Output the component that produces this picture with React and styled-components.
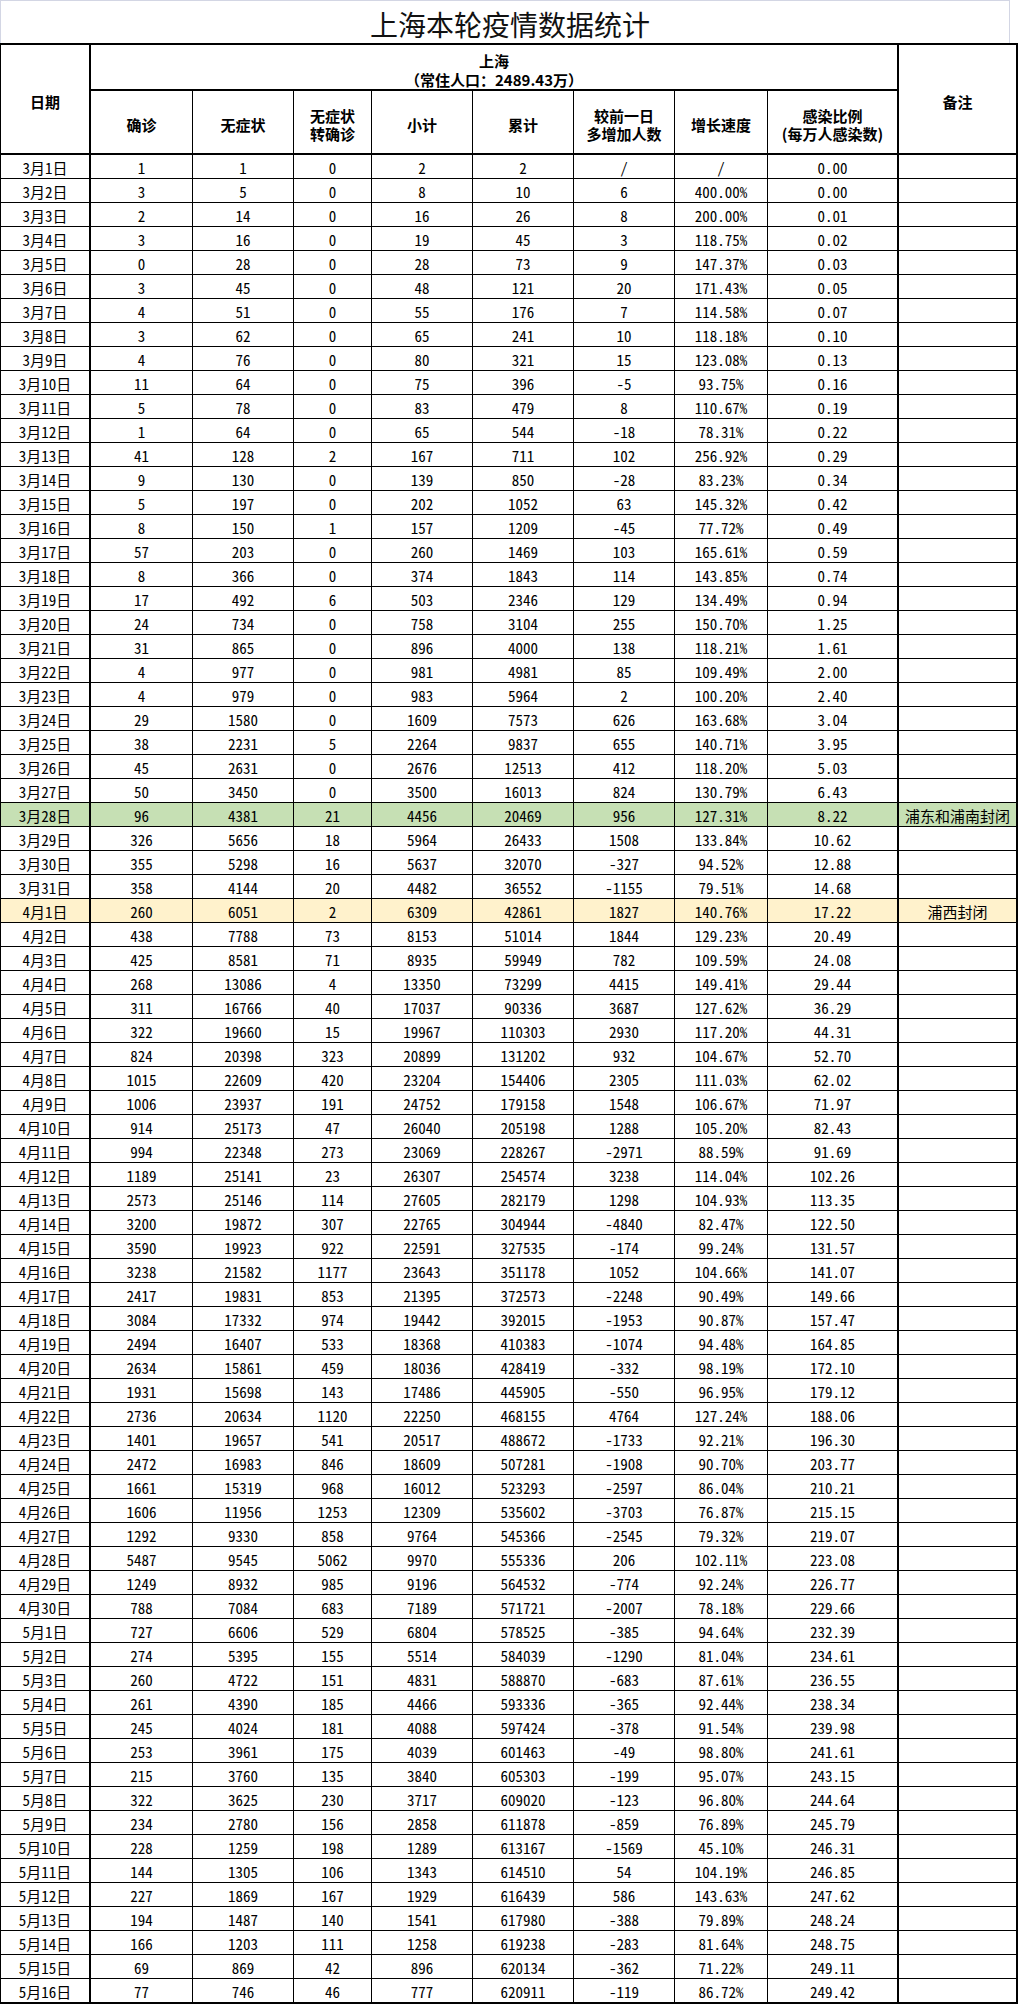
import React from 'react';
import styled, { createGlobalStyle } from 'styled-components';

const GlobalStyle = createGlobalStyle`
  html, body { margin: 0; padding: 0; background: #fff; }
  body { font-family: "Noto Sans CJK SC", "Noto Sans", sans-serif; color: #000; }
`;

const COLS = [90, 102, 101, 78, 101, 101, 101, 93, 131, 119];

const DATA = `3月1日 1 1 0 2 2 / / 0.00
3月2日 3 5 0 8 10 6 400.00% 0.00
3月3日 2 14 0 16 26 8 200.00% 0.01
3月4日 3 16 0 19 45 3 118.75% 0.02
3月5日 0 28 0 28 73 9 147.37% 0.03
3月6日 3 45 0 48 121 20 171.43% 0.05
3月7日 4 51 0 55 176 7 114.58% 0.07
3月8日 3 62 0 65 241 10 118.18% 0.10
3月9日 4 76 0 80 321 15 123.08% 0.13
3月10日 11 64 0 75 396 -5 93.75% 0.16
3月11日 5 78 0 83 479 8 110.67% 0.19
3月12日 1 64 0 65 544 -18 78.31% 0.22
3月13日 41 128 2 167 711 102 256.92% 0.29
3月14日 9 130 0 139 850 -28 83.23% 0.34
3月15日 5 197 0 202 1052 63 145.32% 0.42
3月16日 8 150 1 157 1209 -45 77.72% 0.49
3月17日 57 203 0 260 1469 103 165.61% 0.59
3月18日 8 366 0 374 1843 114 143.85% 0.74
3月19日 17 492 6 503 2346 129 134.49% 0.94
3月20日 24 734 0 758 3104 255 150.70% 1.25
3月21日 31 865 0 896 4000 138 118.21% 1.61
3月22日 4 977 0 981 4981 85 109.49% 2.00
3月23日 4 979 0 983 5964 2 100.20% 2.40
3月24日 29 1580 0 1609 7573 626 163.68% 3.04
3月25日 38 2231 5 2264 9837 655 140.71% 3.95
3月26日 45 2631 0 2676 12513 412 118.20% 5.03
3月27日 50 3450 0 3500 16013 824 130.79% 6.43
3月28日 96 4381 21 4456 20469 956 127.31% 8.22 浦东和浦南封闭
3月29日 326 5656 18 5964 26433 1508 133.84% 10.62
3月30日 355 5298 16 5637 32070 -327 94.52% 12.88
3月31日 358 4144 20 4482 36552 -1155 79.51% 14.68
4月1日 260 6051 2 6309 42861 1827 140.76% 17.22 浦西封闭
4月2日 438 7788 73 8153 51014 1844 129.23% 20.49
4月3日 425 8581 71 8935 59949 782 109.59% 24.08
4月4日 268 13086 4 13350 73299 4415 149.41% 29.44
4月5日 311 16766 40 17037 90336 3687 127.62% 36.29
4月6日 322 19660 15 19967 110303 2930 117.20% 44.31
4月7日 824 20398 323 20899 131202 932 104.67% 52.70
4月8日 1015 22609 420 23204 154406 2305 111.03% 62.02
4月9日 1006 23937 191 24752 179158 1548 106.67% 71.97
4月10日 914 25173 47 26040 205198 1288 105.20% 82.43
4月11日 994 22348 273 23069 228267 -2971 88.59% 91.69
4月12日 1189 25141 23 26307 254574 3238 114.04% 102.26
4月13日 2573 25146 114 27605 282179 1298 104.93% 113.35
4月14日 3200 19872 307 22765 304944 -4840 82.47% 122.50
4月15日 3590 19923 922 22591 327535 -174 99.24% 131.57
4月16日 3238 21582 1177 23643 351178 1052 104.66% 141.07
4月17日 2417 19831 853 21395 372573 -2248 90.49% 149.66
4月18日 3084 17332 974 19442 392015 -1953 90.87% 157.47
4月19日 2494 16407 533 18368 410383 -1074 94.48% 164.85
4月20日 2634 15861 459 18036 428419 -332 98.19% 172.10
4月21日 1931 15698 143 17486 445905 -550 96.95% 179.12
4月22日 2736 20634 1120 22250 468155 4764 127.24% 188.06
4月23日 1401 19657 541 20517 488672 -1733 92.21% 196.30
4月24日 2472 16983 846 18609 507281 -1908 90.70% 203.77
4月25日 1661 15319 968 16012 523293 -2597 86.04% 210.21
4月26日 1606 11956 1253 12309 535602 -3703 76.87% 215.15
4月27日 1292 9330 858 9764 545366 -2545 79.32% 219.07
4月28日 5487 9545 5062 9970 555336 206 102.11% 223.08
4月29日 1249 8932 985 9196 564532 -774 92.24% 226.77
4月30日 788 7084 683 7189 571721 -2007 78.18% 229.66
5月1日 727 6606 529 6804 578525 -385 94.64% 232.39
5月2日 274 5395 155 5514 584039 -1290 81.04% 234.61
5月3日 260 4722 151 4831 588870 -683 87.61% 236.55
5月4日 261 4390 185 4466 593336 -365 92.44% 238.34
5月5日 245 4024 181 4088 597424 -378 91.54% 239.98
5月6日 253 3961 175 4039 601463 -49 98.80% 241.61
5月7日 215 3760 135 3840 605303 -199 95.07% 243.15
5月8日 322 3625 230 3717 609020 -123 96.80% 244.64
5月9日 234 2780 156 2858 611878 -859 76.89% 245.79
5月10日 228 1259 198 1289 613167 -1569 45.10% 246.31
5月11日 144 1305 106 1343 614510 54 104.19% 246.85
5月12日 227 1869 167 1929 616439 586 143.63% 247.62
5月13日 194 1487 140 1541 617980 -388 79.89% 248.24
5月14日 166 1203 111 1258 619238 -283 81.64% 248.75
5月15日 69 869 42 896 620134 -362 71.22% 249.11
5月16日 77 746 46 777 620911 -119 86.72% 249.42`;

const HIGHLIGHT = { '3月28日': '#c6e0b4', '4月1日': '#fff2cc' };

const rows = DATA.split('\n').map((line) => {
  const parts = line.trim().split(' ');
  return { cells: parts.slice(0, 9), note: parts[9] || '' };
});

const THICK_COLS = new Set([0, 8, 9]);

const Page = styled.div`
  width: 1019px;
  background: #fff;
`;

const TitleBar = styled.div`
  box-sizing: border-box;
  width: 1010px;
  height: 43px;
  border: 1px solid #d3d6e4;
  border-bottom: none;
  padding: 3px 0 0 10px;
  display: flex;
  align-items: center;
  justify-content: center;
  font-family: "Noto Sans CJK SC", sans-serif;
  font-size: 28px;
  font-weight: 400;
  color: #111;
`;

const Sheet = styled.div`
  box-sizing: border-box;
  width: 1018px;
  display: grid;
  grid-template-columns: ${COLS.map((c) => `${c}px`).join(' ')};
  grid-template-rows: 46px 64px repeat(${rows.length}, 24px);
  border-top: 2px solid #000;
  border-left: 1px solid #000;
  border-bottom: 1px solid #000;
`;

const Head = styled.div`
  box-sizing: border-box;
  grid-column: span ${(p) => p.$cols || 1};
  grid-row: span ${(p) => p.$rows || 1};
  border-right: ${(p) => (p.$thick ? 2 : 1)}px solid #000;
  border-bottom: 2px solid #000;
  display: flex;
  flex-direction: column;
  align-items: center;
  justify-content: center;
  padding-top: ${(p) => p.$pad ?? 5}px;
  font-size: 15px;
  font-weight: 700;
  line-height: ${(p) => p.$lh || 18}px;
  text-align: center;
  white-space: nowrap;
`;

const Cell = styled.div`
  box-sizing: border-box;
  border-right: ${(p) => (p.$thick ? 2 : 1)}px solid #000;
  border-bottom: 1px solid #000;
  background: ${(p) => p.$bg || '#fff'};
  display: flex;
  align-items: center;
  justify-content: center;
  padding-top: 2px;
  font-size: 15px;
  line-height: 20px;
  white-space: nowrap;
  font-feature-settings: "hwid" 1;
`;

export default function App() {
  return (
    <Page>
      <GlobalStyle />
      <TitleBar>上海本轮疫情数据统计</TitleBar>
      <Sheet>
        <Head $rows={2} $thick $pad={6}>日期</Head>
        <Head $cols={8} $thick $pad={6} $lh={19}>
          <span>上海</span>
          <span>（常住人口：2489.43万）</span>
        </Head>
        <Head $rows={2} $thick $pad={6}>备注</Head>
        <Head>确诊</Head>
        <Head>无症状</Head>
        <Head>
          <span>无症状</span>
          <span>转确诊</span>
        </Head>
        <Head>小计</Head>
        <Head>累计</Head>
        <Head>
          <span>较前一日</span>
          <span>多增加人数</span>
        </Head>
        <Head>增长速度</Head>
        <Head $thick>
          <span>感染比例</span>
          <span>(每万人感染数)</span>
        </Head>
        {rows.map((r) => {
          const bg = HIGHLIGHT[r.cells[0]];
          return (
            <React.Fragment key={r.cells[0]}>
              {r.cells.map((v, i) => (
                <Cell key={i} $thick={THICK_COLS.has(i)} $bg={bg}>
                  {v}
                </Cell>
              ))}
              <Cell $thick $bg={bg}>{r.note}</Cell>
            </React.Fragment>
          );
        })}
      </Sheet>
    </Page>
  );
}
